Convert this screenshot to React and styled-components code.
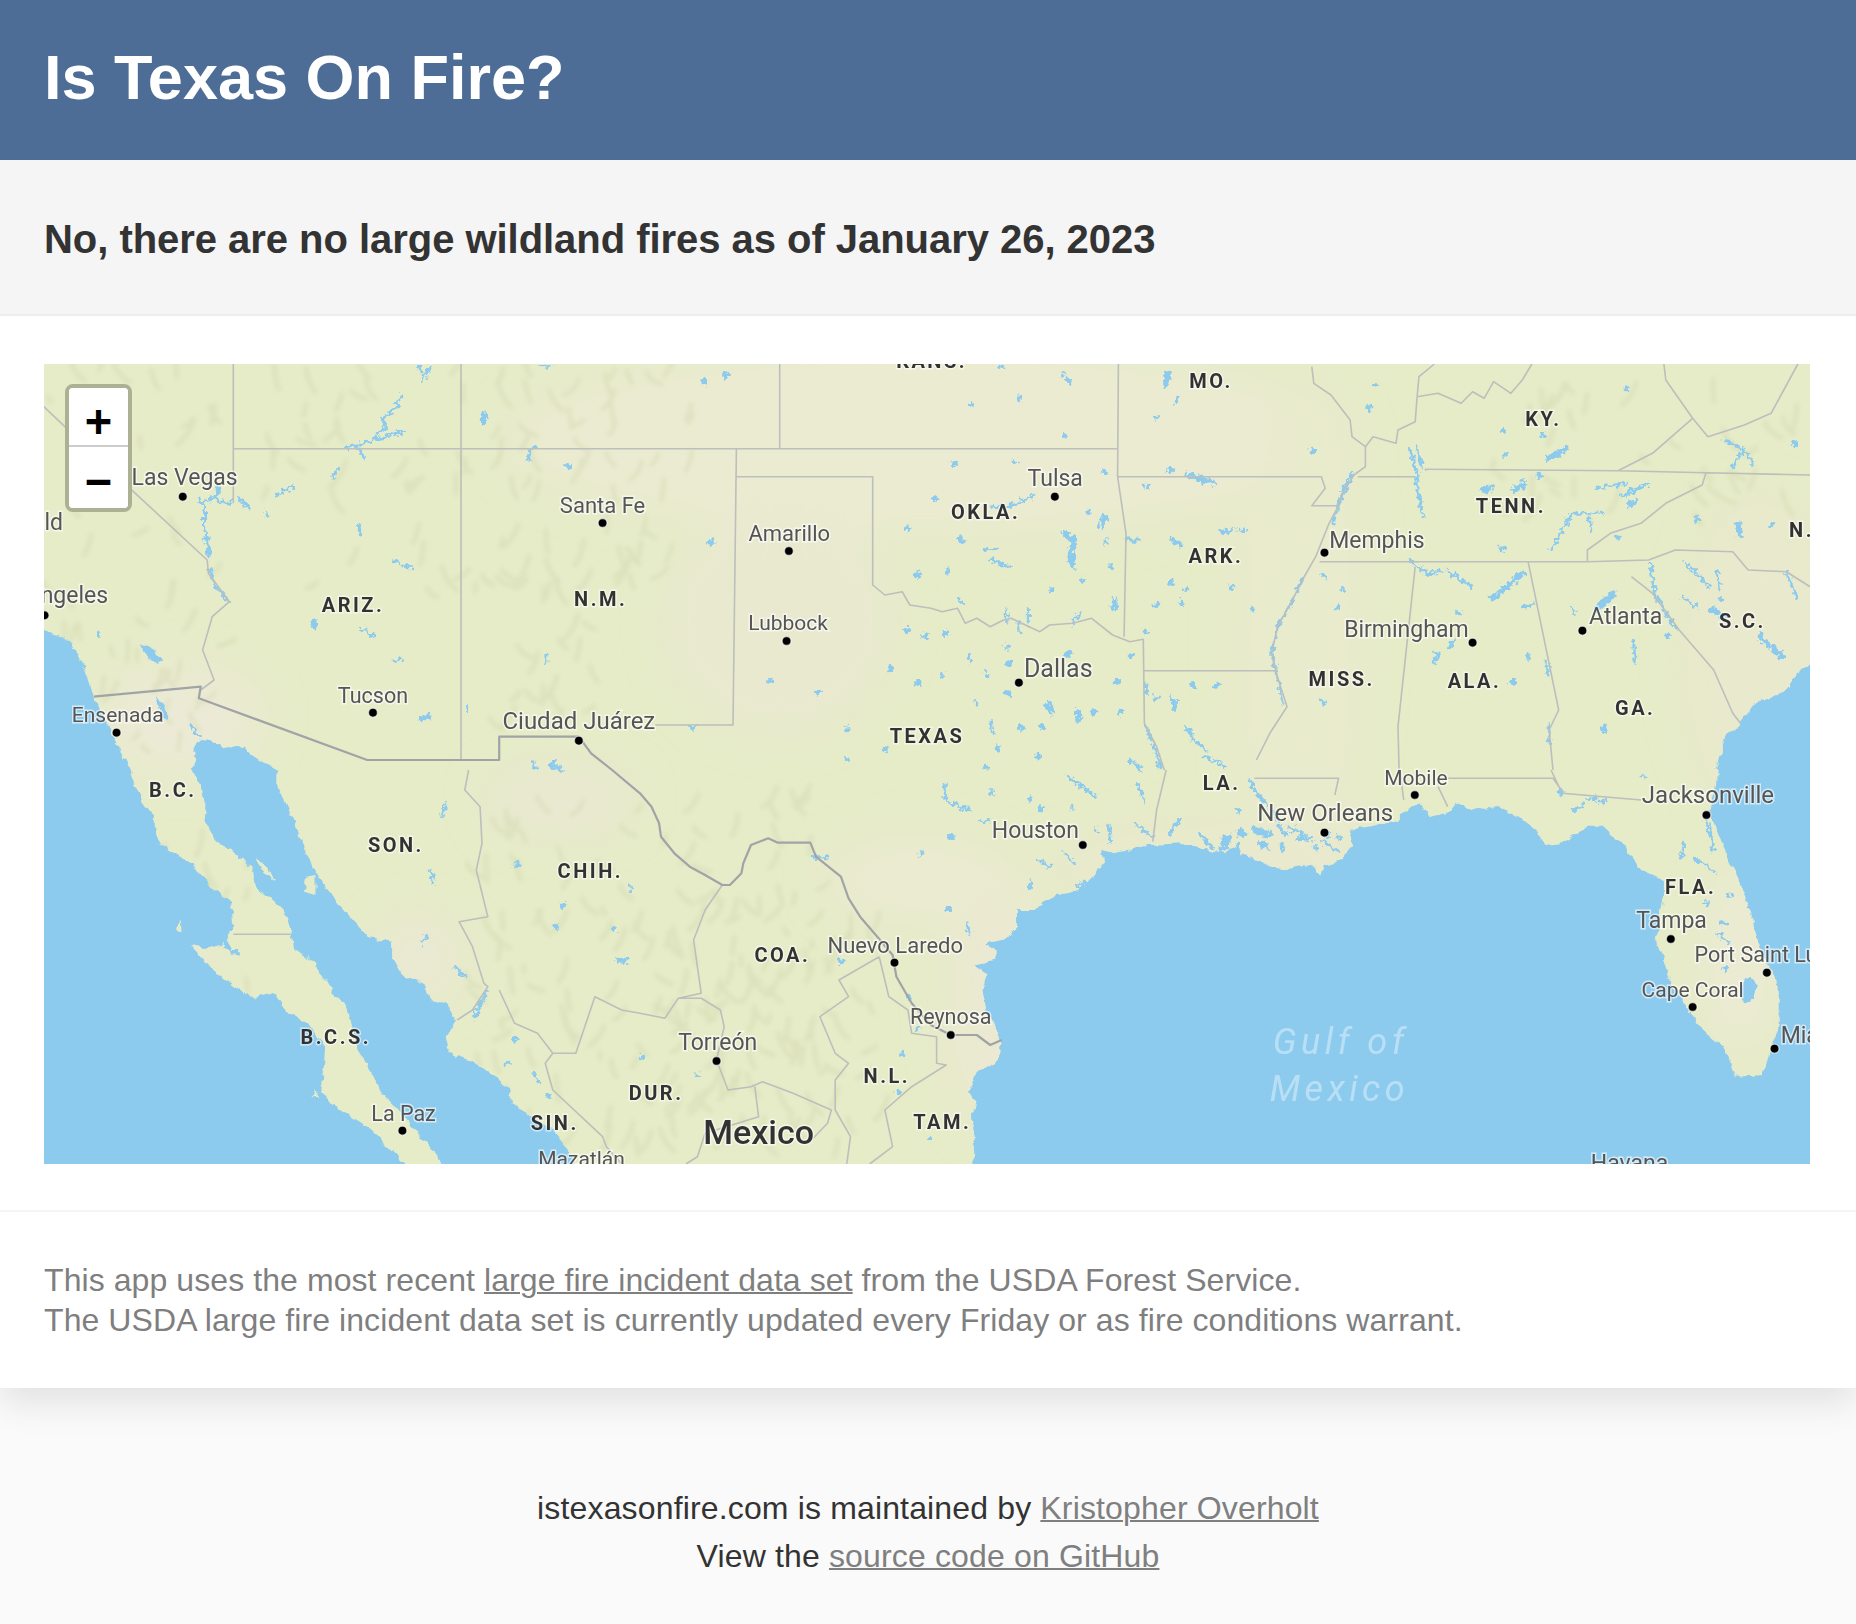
import React from 'react';
import styled, { createGlobalStyle } from 'styled-components';

const GlobalStyle = createGlobalStyle`
  html, body { margin: 0; padding: 0; }
  body {
    background: #fafafa;
    color: #333333;
    font-family: "Liberation Sans", Arial, sans-serif;
  }
`;

const Card = styled.main`
  background: #ffffff;
  box-shadow: 0 14px 34px rgba(0, 0, 0, 0.1);
`;

const Banner = styled.header`
  height: 160px;
  box-sizing: border-box;
  padding: 0 44px 6px;
  display: flex;
  align-items: center;
  background: #4e6d96;
`;

const Title = styled.h1`
  margin: 0;
  font-size: 63px;
  font-weight: 700;
  color: #ffffff;
`;

const Status = styled.section`
  height: 156px;
  box-sizing: border-box;
  padding: 5px 44px 0;
  display: flex;
  align-items: center;
  background: #f5f5f5;
  border-bottom: 2px solid #eeeeee;
`;

const Answer = styled.h2`
  margin: 0;
  font-size: 40px;
  font-weight: 700;
  letter-spacing: -0.04px;
  color: #333333;
`;

const MapSection = styled.section`
  padding: 48px 46px 46px 44px;
  border-bottom: 2px solid #f5f5f5;
`;

const MapFrame = styled.div`
  position: relative;
  height: 800px;
  overflow: hidden;
  background: #e6ebc8;
`;

const MapDrawing = styled.svg`
  display: block;
  width: 100%;
  height: 100%;
`;

const ZoomBox = styled.div`
  position: absolute;
  top: 20px;
  left: 21px;
  width: 59px;
  display: flex;
  flex-direction: column;
  border: 4px solid #adb092;
  border-radius: 8px;
  overflow: hidden;
  background: #ffffff;
`;

const ZoomButton = styled.button`
  height: ${(p) => (p.$last ? '61px' : '59px')};
  padding: ${(p) => (p.$last ? '6px' : '8px')} 0 0;
  border: 0;
  border-bottom: ${(p) => (p.$last ? '0' : '2px solid #cccccc')};
  background: #ffffff;
  color: #000000;
  font-family: "DejaVu Sans Mono", monospace;
  font-size: 44px;
  font-weight: 700;
  line-height: 50px;
`;

const Notes = styled.section`
  padding: 48px 44px;
  font-size: 32px;
  line-height: 40px;
  letter-spacing: 0.08px;
  color: #7f7f7f;
`;

const NoteLink = styled.a`
  color: #7f7f7f;
  text-decoration: underline;
  text-decoration-thickness: 2px;
`;

const Footer = styled.footer`
  height: 236px;
  box-sizing: border-box;
  padding-top: 96px;
  text-align: center;
  font-size: 32px;
  line-height: 48px;
  letter-spacing: 0.15px;
  color: #333333;
`;

const CityName = styled.text`
  font-family: Roboto, "Noto Sans", sans-serif;
  font-size: ${(p) => p.$size || 23}px;
  font-weight: ${(p) => p.$weight || 400};
  fill: ${(p) => p.$fill || '#555555'};
  text-anchor: ${(p) => p.$anchor || 'middle'};
  dominant-baseline: central;
  paint-order: stroke;
  stroke: rgba(255, 255, 255, 0.6);
  stroke-width: 3px;
`;

const StateName = styled.text`
  font-family: Roboto, "Noto Sans", sans-serif;
  font-size: 20px;
  font-weight: 700;
  letter-spacing: 2.5px;
  fill: #333333;
  text-anchor: ${(p) => p.$anchor || 'middle'};
  dominant-baseline: central;
  paint-order: stroke;
  stroke: rgba(255, 255, 255, 0.55);
  stroke-width: 3px;
`;

const SeaName = styled.text`
  font-family: Roboto, "Noto Sans", sans-serif;
  font-size: 36px;
  font-style: italic;
  letter-spacing: 4.4px;
  fill: rgba(255, 255, 255, 0.38);
  text-anchor: middle;
  dominant-baseline: central;
`;

// the map was traced off crops, so points are in crop space, one origin per crop
const TILES = {
  A: [40, 360], B: [640, 360], C: [1220, 360],
  D: [40, 770], E: [640, 770], F: [1220, 770],
};

const at = (tile, x, y) => [TILES[tile][0] + x / 2.613, TILES[tile][1] + y / 3];

const points = (spec) => {
  let tile = 'A';
  const out = [];
  spec.trim().split(/\s+/).forEach((tok) => {
    if (TILES[tok]) { tile = tok; return; }
    const [x, y] = tok.split(',').map(Number);
    out.push(at(tile, x, y));
  });
  return out;
};

const toPath = (pts, closed) => {
  const list = pts.length === 1 ? [pts[0], pts[0]] : pts;
  return 'M' + list.map((p) => p[0].toFixed(1) + ' ' + p[1].toFixed(1)).join('L') + (closed ? 'Z' : '');
};

const line = (spec) => toPath(points(spec));
const shape = (spec) => toPath(points(spec), true);

const group = (byTile) =>
  Object.keys(byTile).flatMap((tile) =>
    byTile[tile].split('|').map((item) => line(tile + ' ' + item)),
  ).join('');

const WATER = [
  // pacific
  `A -60,800 10,810 60,830 100,880 125,950 140,1010 170,1080 200,1150 235,1230
   D 240,25 270,100 300,140 300,190 320,230 400,285 440,340 500,400 505,470 485,510 470,525 440,535 390,525
     460,610 555,685 610,670 640,720 700,760 745,830 740,920 735,960 770,1010 860,1075 900,1120 950,1182 970,1240 -60,1240`,
  // gulf of california
  `A 405,1150 440,1135 480,1165 520,1155 560,1190 620,1230
   D 620,0 620,50 650,120 680,200 710,285 750,360 810,440 860,505 920,515 920,570 950,620 1000,635 1015,690 1060,695
     1090,750 1060,800 1070,850 1120,870 1190,920 1230,960 1230,1000 1290,1040 1340,1080 1380,1140 1400,1182 1420,1240
     1060,1240 1050,1182 1015,1125 985,1085 920,1000 895,975 870,910 830,840 820,770 795,700 770,680 745,630 710,570 665,540
     655,480 640,425 600,380 565,355 555,295 500,240 460,215 430,150 435,100 410,20 400,0`,
  // gulf of mexico and the atlantic, texas round to georgia
  `E 875,1240 870,1030 880,1000 860,965 880,905 930,880 945,820 925,760 905,720 895,660 910,610 875,585 925,570 930,545
     905,520 945,510 985,480 985,420 1030,420 1080,380 1145,360 1180,320 1210,280 1205,240 1240,250 1330,225 1420,220
     1490,240 1530,250 1568,215
   F 50,255 75,262 100,270 130,290 165,298 215,285 250,290 265,320 270,285 320,270 345,222 340,180 410,165 470,150
     470,130 520,100 550,140 600,125 620,95 650,120 735,110 790,150 830,185 850,225 890,220 960,170 1000,170 1060,230
     1100,300 1160,330 1160,380 1150,430 1140,520 1160,570 1170,620 1215,700 1260,780 1320,840 1345,920 1420,915
     1435,850 1460,770 1460,650 1420,560 1400,490 1370,370 1320,240 1280,130 1300,20 1300,0
   C 1295,1230 1320,1130 1360,1090 1400,1030 1470,1000 1510,940 1542,915 1620,860
   F 1620,1240`,
  // vizcaino bay, salton sea, laguna, okeechobee
  `D 480,500 500,540 520,540 515,555 480,530`,
  `A 265,850 300,870 322,900 305,915 270,880`,
  `A 300,1005 320,1035 340,1080 315,1070`,
  `F 1375,620 1400,640 1395,690 1375,700 1360,680`,
  `F 85,170 130,180 125,205 95,200`,
];

const ISLANDS = [
  `D 565,265 585,280 615,335 580,305`,
  `D 695,320 720,315 720,375 690,365`,
  `D 355,480 368,450 370,485`,
  `F 1140,515 1160,510 1160,540`,
  `D 720,960 730,985 715,980`,
];

// the lace of the delta and the bayous
const DELTA = `F 40,190 60,205 70,195 50,170|95,210 125,215 130,240 105,235|200,180 225,190 215,200|
  240,230 260,225 255,245|300,200 320,195 318,215|150,225 170,215 165,250|5,200 30,190 25,235 0,245`;

const STREAMS = {
  A: `945,110 925,150 895,175 905,195 870,240 830,255 800,265|880,240 955,212|830,260 845,290|985,15 1000,40|1020,15 1000,65|
    1305,15 1335,15|1275,300 1280,270 1298,260|780,325 765,350|615,405 660,380|520,415 545,445|590,455 592,470|
    415,420 425,430 460,410 465,380|460,415 495,435 505,410|430,440 430,500 442,590|445,630 460,680 490,720|830,495 838,525|
    930,605 945,615|955,620 972,620|838,805 872,828|925,903 945,895|1322,885 1322,910|1115,1040 1115,1055|395,1100 420,1130|
    1290,1205 1295,1225|1340,1215 1365,1230`,
  B: `1030,405 975,435 920,440|900,570 935,565|915,600 965,620|835,720 845,730|955,750 960,780|1015,745 1015,790|990,790 990,815|
    1150,755 1130,795|875,1025 885,1035|915,1085 920,1115|1320,1095 1345,1160 1360,1230|1280,1200 1310,1230|1425,1100 1445,1140 1480,1170|
    1475,1190 1530,1220|1320,970 1325,1000|1270,540 1305,540|1385,535 1420,560|1515,515 1555,510`,
  C: `495,265 515,340 515,380 530,470|515,260 530,330|495,600 545,645 580,630|595,635 660,680|985,385 1060,370|1050,410 1120,370|
    1000,460 920,460 865,570|965,470 970,515|1125,610 1135,700 1190,805|1215,610 1280,680|1300,640 1305,680|1210,715 1245,740|
    1480,640 1510,715|1080,840 1085,905|855,900 855,945|790,740 820,735|920,740 925,760|345,340 320,400 295,490|215,660 185,730 150,800 135,880 150,950 165,1030|
    1320,240 1380,280 1390,310|1370,260 1340,320|1500,1190 1510,1210|560,910 570,880|600,860 615,840|860,1090 860,1150`,
  D: `1060,100 1050,140|1020,305 1030,345|1000,520 1010,495|1085,590 1110,620|1170,660 1135,740|1290,910 1305,940|1545,350 1548,360`,
  E: `795,40 800,95 860,120|1120,20 1190,80|1300,40 1320,100|1290,160 1340,200|1385,190 1410,150|1460,190 1500,240|455,260 490,260|
    1225,170 1230,220|1040,270 1070,290|1110,250 1135,280|1020,335 1020,355|890,152 915,152|855,455 860,490|1140,350 1165,335`,
  F: `75,30 100,75 125,110|1270,150 1290,240|1215,220 1205,265|1240,265 1290,305|1300,490 1330,520|920,120 945,108|960,85 980,85|
    1100,20 1108,20|210,185 180,175|140,120 150,150|200,210 240,205|270,215 305,240|175,195 150,165`,
};

const LAKES = {
  A: `1160,165 1160,185|1380,318|715,785 715,795|1000,1075 1015,1070|150,822|1340,1215`,
  B: `165,65|225,45|945,20|1105,45|1120,60|990,115|865,135|1108,225|820,312|980,305|1215,335|770,415|700,508|838,540|1172,455|
    1205,495 1215,475|1215,545|1110,520 1135,545 1125,575 1130,620|1230,618|725,645|805,632|1155,662|1075,690|1240,720 1240,745|
    700,810|745,828|800,820|960,860|860,895|965,910|905,945|655,925|790,945|725,970|340,965|465,998|185,547|138,1100|540,1108|640,1168|540,1200|
    960,1000|1065,1035 1075,1060|1145,1055 1145,1080|1185,1055|1255,1058|1050,1100|995,1103|935,1165|1040,1190|905,1220|1245,965|1285,888|
    1120,882|1395,1020 1395,1040|1440,1120|1320,812|1345,1015|1445,975|1505,975|1380,40 1375,70|1403,120|1350,170|1385,330|1430,345 1495,368|
    1325,380|1425,690|1390,670|1415,728|1352,735|1545,685`,
  C: `405,75|390,143|242,272|740,210|845,225|860,295 905,265|745,285|835,345|690,390 710,380|770,390 795,370|1070,435 1085,425|735,565|1040,530|
    1245,480|1355,490 1358,525|1440,495|1500,250|1060,85|790,640 715,715|625,760|1030,700 985,745|1310,720|1285,750 1320,770|1410,830 1470,890|
    270,1025|320,690|305,745|275,650|85,750|30,680|570,880|805,887|1003,1105|765,965|1170,825|60,510`,
  D: `1245,285|1370,405|1348,470|1500,478|1510,572 1530,572|1240,810|1220,880|1330,975`,
  E: `920,70|1020,85|1130,110|1045,115|815,200|735,250|805,418|1190,180|525,575|725,775|685,855|755,1110|675,965|150,915|5,860|700,680`,
  F: `1275,400|1330,375|1315,460|1320,595|980,85|1000,95|890,65|45,120|130,190|280,195|215,195`,
};

const STATE_LINES = {
  A: `505,12 505,430|505,266 1568,266|1100,12 1100,1200|10,140 235,385 437,600 440,640 495,725 450,770 425,870 455,960 420,990`,
  B: `0,266 1250,266|252,266 243,1095 40,1095|365,12 365,266|252,350 608,350 608,675 640,705 685,695 705,735 760,745 790,755 830,745 850,790 880,775
    915,800 950,780 970,775 1045,815 1070,795 1130,790 1180,775 1235,825 1280,845 1315,838 1318,1090 1350,1160 1370,1230|
    1250,12 1248,350 1270,520 1265,830|1248,350 1568,350|1315,932 1568,932`,
  C: `0,350 265,350 275,385 240,437 310,437|240,20 245,70 290,105 340,180 345,230 380,260 380,320 350,345 320,400 310,437 285,490 250,590 215,660 185,730
    150,800 135,880 150,950 175,1040 130,1120 95,1200|380,260 400,230 460,250 465,210 510,185 515,110 570,100 630,130 660,95 690,115 715,65 760,100 790,60 815,12|
    515,110 520,50 560,12|360,350 510,350|535,328 1040,332 1270,338 1542,345|1040,332 1130,280 1235,175 1165,60 1160,12|1235,175 1275,230 1330,210 1370,195 1440,160 1510,12|
    260,605 960,605 1120,600 1190,570 1340,575 1380,630 1480,635 1542,680|960,605 960,570 1020,520 1100,490 1165,430 1260,375 1270,338|
    510,620 465,1100 468,1230|805,605 885,1050 860,1110 870,1230|1075,650 1130,700 1200,810 1290,930 1340,1060 1360,1090|0,932 145,932`,
  D: `1120,0 1110,60 1150,110 1155,220 1140,300 1170,440 1095,455 1130,530 1160,640 1170,650 1130,720 1090,750|1200,660 1240,760 1300,790 1340,850 1320,880 1340,960 1470,1100 1480,1130 1520,1182|
    1340,850 1400,850 1450,680 1520,720 1568,730|505,493 655,493`,
  E: `1375,0 1350,120 1340,215|215,345 170,420 140,510 160,670 100,685 65,745 0,730|100,685 160,685 210,720 220,770 200,870 230,960 290,950 320,935 400,970 500,1020 490,1060 440,1120|
    625,560 520,630 545,680 470,740 510,850 545,880 510,930 510,1020 550,1100 540,1182|625,560 650,680 700,720 710,790 775,800 775,880 800,885 710,950 640,1020 660,1130 600,1182|
    300,950 310,1040 170,1090 150,1160 120,1182`,
  F: `90,25 310,25 300,75|470,0 480,90|570,50 595,110|595,25 870,25 895,65|895,70 1100,90|865,0 890,60`,
};

const BORDER = [
  `A 140,1010 420,980 415,1015 855,1200 1200,1200 1200,1130 1408,1130 1440,1180 1495,1230
   E 0,70 30,110 50,160 55,200 90,250 130,290 170,315 215,345 235,345 265,310 270,280 290,225 335,205 360,218 445,218 460,260
     525,320 545,385 575,440 620,500 660,555 670,620 710,700 760,765 812,795 880,795 915,825 945,810`,
];

const CITIES = [
  ['A', 378, 352, 'Las Vegas', 373, 410],
  ['A', 1470, 436, 'Santa Fe', 1470, 489, { size: 22 }],
  ['A', 870, 1005, 'Tucson', 870, 1058, { size: 21.5 }],
  ['A', 203, 1065, 'Ensenada', 200, 1118, { size: 21 }],
  ['A', 1408, 1083, 'Ciudad Juárez', 1408, 1142, { size: 24 }],
  ['B', 1085, 355, 'Tulsa', 1084, 410],
  ['B', 390, 520, 'Amarillo', 389, 573, { size: 22 }],
  ['B', 387, 790, 'Lubbock', 383, 843, { size: 21 }],
  ['B', 1093, 925, 'Dallas', 990, 968, { size: 25 }],
  ['C', 410, 540, 'Memphis', 273, 578],
  ['C', 487, 808, 'Birmingham', 660, 848],
  ['C', 1060, 770, 'Atlanta', 947, 812],
  ['D', 950, 1030, 'La Paz', 947, 1082, { size: 21.5 }],
  ['D', 1415, 1168, 'Mazatlán', null, null, { size: 21 }],
  ['E', 1033, 180, 'Houston', 1157, 225],
  ['E', 667, 525, 'Nuevo Laredo', 665, 578, { size: 22 }],
  ['E', 812, 740, 'Reynosa', 812, 795, { size: 21.5 }],
  ['E', 203, 818, 'Torreón', 200, 873],
  ['F', 512, 25, 'Mobile', 509, 75, { size: 21 }],
  ['F', 275, 130, 'New Orleans', 273, 188, { size: 24 }],
  ['F', 1275, 75, 'Jacksonville', 1271, 135, { size: 24 }],
  ['F', 1180, 452, 'Tampa', 1178, 507],
  ['F', 1240, 553, 'Port Saint Lucie', 1429, 608, { anchor: 'start', size: 21.5 }],
  ['F', 1235, 660, 'Cape Coral', 1235, 711, { size: 21 }],
  ['F', 1465, 795, 'Miami', 1449, 836, { anchor: 'start' }],
  ['F', 1070, 1180, 'Havana', null],
  ['A', 60, 488, 'Bakersfield', null, null, { anchor: 'end' }],
  ['A', 178, 705, 'Los Angeles', 12, 766, { anchor: 'end' }],
];

const STATES = [
  ['B', 762, 2, 'KANS.'], ['B', 1492, 62, 'MO.'], ['B', 903, 455, 'OKLA.'], ['B', 1505, 588, 'ARK.'], ['B', 750, 1127, 'TEXAS'],
  ['C', 845, 177, 'KY.'], ['C', 760, 438, 'TENN.'], ['C', 1365, 783, 'S.C.'], ['C', 318, 958, 'MISS.'], ['C', 665, 963, 'ALA.'],
  ['C', 1085, 1043, 'GA.'], ['A', 818, 735, 'ARIZ.'], ['A', 1465, 717, 'N.M.'], ['E', 1520, 38, 'LA.'], ['F', 1230, 350, 'FLA.'],
  ['D', 347, 60, 'B.C.'], ['D', 930, 225, 'SON.'], ['D', 1438, 302, 'CHIH.'], ['D', 773, 802, 'B.C.S.'], ['D', 1345, 1058, 'SIN.'],
  ['E', 42, 970, 'DUR.'], ['E', 372, 555, 'COA.'], ['E', 645, 918, 'N.L.'], ['E', 790, 1055, 'TAM.'],
  ['C', 1487, 510, 'N.C.', 'start'],
];

// soft tone patches on the land: [x, y, rx, ry, colour] in page pixels
const TONES = [
  [930, 440, 420, 90, '#ebebd1'],
  [1300, 640, 60, 260, '#e9ebcd'],
  [780, 620, 110, 110, '#e9e9d0'],
  [180, 720, 80, 50, '#ecead6'],
  [560, 800, 70, 30, '#e9e8d2'],
  [1240, 870, 180, 40, '#e9e9ce'],
  [1760, 660, 70, 160, '#e9e9cd'],
  [160, 960, 30, 40, '#ece7dc'],
  [420, 960, 40, 40, '#ebe8d4'],
  [1740, 960, 30, 90, '#ecebd5'],
  [1000, 1000, 50, 130, '#ebe9d2'],
  [920, 880, 90, 40, '#ebebd1'],
];

// ridgelines, scattered from a fixed seed so the picture stays the same
const RIDGES = [
  [50, 370, 640, 240, 120],
  [44, 600, 180, 160, 30],
  [500, 620, 100, 130, 16],
  [480, 800, 340, 360, 120],
  [640, 900, 240, 260, 70],
  [1480, 380, 320, 160, 36],
  [150, 800, 120, 280, 20],
];

const ridgeMarks = () => {
  let seed = 7;
  const rand = () => {
    seed = (seed * 16807) % 2147483647;
    return seed / 2147483647;
  };
  let d = '';
  RIDGES.forEach(([x, y, w, h, n]) => {
    for (let i = 0; i < n; i += 1) {
      const sx = x + rand() * w;
      const sy = y + rand() * h;
      const dx = (rand() - 0.5) * 34;
      const dy = -6 - rand() * 20;
      d += `M${sx.toFixed(0)} ${sy.toFixed(0)}q${(dx * 0.8).toFixed(0)} ${(dy * 0.4).toFixed(0)} ${dx.toFixed(0)} ${dy.toFixed(0)}`;
    }
  });
  return d;
};

const MapArt = () => {
  const dots = CITIES.filter((c) => c[4] !== null);
  return (
    <MapDrawing viewBox="44 364 1766 800" preserveAspectRatio="none">
      <defs>
        <filter id="soft" x="-20%" y="-20%" width="140%" height="140%"><feGaussianBlur stdDeviation="22" /></filter>
        <filter id="hatch" x="-5%" y="-5%" width="110%" height="110%"><feGaussianBlur stdDeviation="2" /></filter>
        <filter id="rough" x="0" y="0" width="100%" height="100%" colorInterpolationFilters="sRGB">
          <feTurbulence type="fractalNoise" baseFrequency="0.12" numOctaves="2" seed="4" />
          <feDisplacementMap in="SourceGraphic" scale="7" xChannelSelector="R" yChannelSelector="G" />
          <feGaussianBlur stdDeviation="0.5" />
        </filter>
        <filter id="lace" x="0" y="0" width="100%" height="100%" colorInterpolationFilters="sRGB">
          <feTurbulence type="fractalNoise" baseFrequency="0.22" numOctaves="2" seed="9" />
          <feDisplacementMap in="SourceGraphic" scale="10" xChannelSelector="R" yChannelSelector="G" />
          <feGaussianBlur stdDeviation="0.45" />
        </filter>
        <filter id="fine" x="0" y="0" width="100%" height="100%"><feGaussianBlur stdDeviation="0.45" /></filter>
      </defs>

      <rect x="44" y="364" width="1766" height="800" fill="#e6ebc8" />
      <g filter="url(#soft)">
        {TONES.map(([cx, cy, rx, ry, c]) => (
          <ellipse key={cx + '-' + cy} cx={cx} cy={cy} rx={rx} ry={ry} fill={c} />
        ))}
      </g>
      <path d={ridgeMarks()} fill="none" stroke="#cdd4a9" strokeWidth="4" strokeLinecap="round" opacity="0.4" filter="url(#hatch)" />

      <g filter="url(#rough)">
        {WATER.map((w) => <path key={w.slice(0, 24)} d={shape(w)} fill="#8ccbee" />)}
        {ISLANDS.map((w) => <path key={w} d={shape(w)} fill="#e6ebc8" />)}
      </g>
      <g filter="url(#lace)">
        {DELTA.split('|').map((w) => <path key={w} d={shape('F ' + w)} fill="#8ccbee" />)}
        <path d={group(STREAMS)} fill="none" stroke="#8ccbee" strokeWidth="3" strokeLinecap="round" strokeLinejoin="round" />
        <path d={group(LAKES)} fill="none" stroke="#8ccbee" strokeWidth="6" strokeLinecap="round" strokeLinejoin="round" />
      </g>

      <g filter="url(#fine)" fill="none" strokeLinejoin="round">
        <path d={group(STATE_LINES)} stroke="#bcbfbb" strokeWidth="1.6" />
        {BORDER.map((b) => <path key={b.slice(0, 20)} d={line(b)} stroke="#a1a4a6" strokeWidth="2.2" />)}
      </g>

      <g filter="url(#fine)">
        {dots.map(([tile, , , name, dx, dy]) => {
          const [x, y] = at(tile, dx, dy);
          return <circle key={name} cx={x} cy={y} r="4.5" fill="#050505" stroke="#ffffff" strokeOpacity="0.6" strokeWidth="1.4" />;
        })}
        {CITIES.map(([tile, tx, ty, name, , , opts]) => {
          const [x, y] = at(tile, tx, ty);
          return (
            <CityName key={name} x={x} y={y} $size={opts && opts.size} $anchor={opts && opts.anchor}>{name}</CityName>
          );
        })}
        <CityName x={at('E', 310, 0)[0]} y={at('E', 0, 1085)[1]} $size={34} $weight={500} $fill="#333333">Mexico</CityName>
        {STATES.map(([tile, tx, ty, name, anchor]) => {
          const [x, y] = at(tile, tx, ty);
          return <StateName key={name} x={x} y={y} $anchor={anchor}>{name}</StateName>;
        })}
        <SeaName x={at('F', 315, 0)[0]} y={at('F', 0, 815)[1]}>Gulf of</SeaName>
        <SeaName x={at('F', 312, 0)[0]} y={at('F', 0, 958)[1]}>Mexico</SeaName>
      </g>
    </MapDrawing>
  );
};

export default function App() {
  return (
    <>
      <GlobalStyle />
      <Card>
        <Banner>
          <Title>Is Texas On Fire?</Title>
        </Banner>
        <Status>
          <Answer>No, there are no large wildland fires as of January 26, 2023</Answer>
        </Status>
        <MapSection>
          <MapFrame>
            <MapArt />
            <ZoomBox>
              <ZoomButton>+</ZoomButton>
              <ZoomButton $last>−</ZoomButton>
            </ZoomBox>
          </MapFrame>
        </MapSection>
        <Notes>
          This app uses the most recent <NoteLink href="#">large fire incident data set</NoteLink> from the USDA Forest Service.
          <br />
          The USDA large fire incident data set is currently updated every Friday or as fire conditions warrant.
        </Notes>
      </Card>
      <Footer>
        istexasonfire.com is maintained by <NoteLink href="#">Kristopher Overholt</NoteLink>
        <br />
        View the <NoteLink href="#">source code on GitHub</NoteLink>
      </Footer>
    </>
  );
}
